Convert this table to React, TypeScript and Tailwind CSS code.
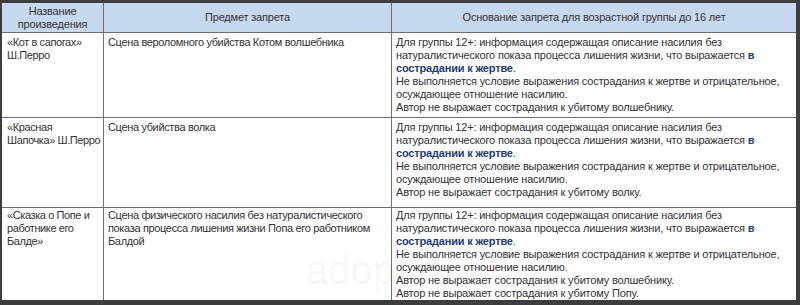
const rows = [
  {
    title: ["«Кот в сапогах»", "Ш.Перро"],
    subject: ["Сцена вероломного убийства Котом волшебника"],
    authorLines: ["Автор не выражает сострадания к убитому волшебнику."],
    pad: "pt-[3px]",
  },
  {
    title: ["«Красная", "Шапочка» Ш.Перро"],
    subject: ["Сцена убийства волка"],
    authorLines: ["Автор не выражает сострадания к убитому волку."],
    pad: "pt-[3px]",
  },
  {
    title: ["«Сказка о Попе и", "работнике его", "Балде»"],
    subject: [
      "Сцена физического насилия без натуралистического",
      "показа процесса лишения жизни Попа его работником",
      "Балдой",
    ],
    authorLines: [
      "Автор не выражает сострадания к убитому волшебнику.",
      "Автор не выражает сострадания к убитому Попу.",
    ],
    pad: "pt-[1px]",
  },
];

function Lines({ lines }: { lines: string[] }) {
  return (
    <>
      {lines.map((l, i) => (
        <span key={i} className="block whitespace-nowrap">
          {l}
        </span>
      ))}
    </>
  );
}

function Reason({ authorLines }: { authorLines: string[] }) {
  return (
    <>
      <span className="block whitespace-nowrap">
        Для группы 12+: информация содержащая описание насилия без
      </span>
      <span className="block whitespace-nowrap">
        натуралистического показа процесса лишения жизни, что выражается{" "}
        <b className="font-bold text-[#1d3c78]">в</b>
      </span>
      <span className="block whitespace-nowrap">
        <b className="font-bold text-[#1d3c78]">сострадании к жертве</b>.
      </span>
      <span className="block whitespace-nowrap">
        Не выполняется условие выражения сострадания к жертве и отрицательное,
      </span>
      <span className="block whitespace-nowrap">осуждающее отношение насилию.</span>
      <Lines lines={authorLines} />
    </>
  );
}

export default function App() {
  return (
    <div className="relative w-[800px] h-[305px] bg-[#3d3d3d] pt-[3px] pl-[2px] pr-[4px] pb-[5px] font-['Liberation_Sans',Arial,sans-serif] text-[11px] leading-[13px] tracking-[-0.18px] text-[#333333] overflow-hidden">
      <div className="grid h-full grid-cols-[101px_287px_1fr] grid-rows-[29px_84px_89px_1fr] gap-px bg-[#6e6e6e]">
        {/* Header */}
        <div className="bg-[#c6d9f1] flex items-center justify-center text-center">
          <span>
            Название
            <br />
            произведения
          </span>
        </div>
        <div className="bg-[#c6d9f1] flex items-center justify-center">Предмет запрета</div>
        <div className="bg-[#c6d9f1] flex items-center justify-center">
          Основание запрета для возрастной группы до 16 лет
        </div>

        {rows.map((r, i) => (
          <div key={i} className="contents">
            <div className={`bg-white pl-[5px] tracking-[-0.4px] ${r.pad}`}>
              <Lines lines={r.title} />
            </div>
            <div className={`bg-white px-[4px] tracking-[-0.35px] overflow-hidden ${r.pad}`}>
              <Lines lines={r.subject} />
            </div>
            <div className={`bg-white px-[4px] overflow-hidden ${r.pad}`}>
              <Reason authorLines={r.authorLines} />
            </div>
          </div>
        ))}
      </div>

      {/* watermark */}
      <div className="absolute left-[306px] top-[250px] pointer-events-none select-none text-[40px] leading-[40px] tracking-normal text-black/[0.05]">
        adopt.ru
      </div>
    </div>
  );
}
